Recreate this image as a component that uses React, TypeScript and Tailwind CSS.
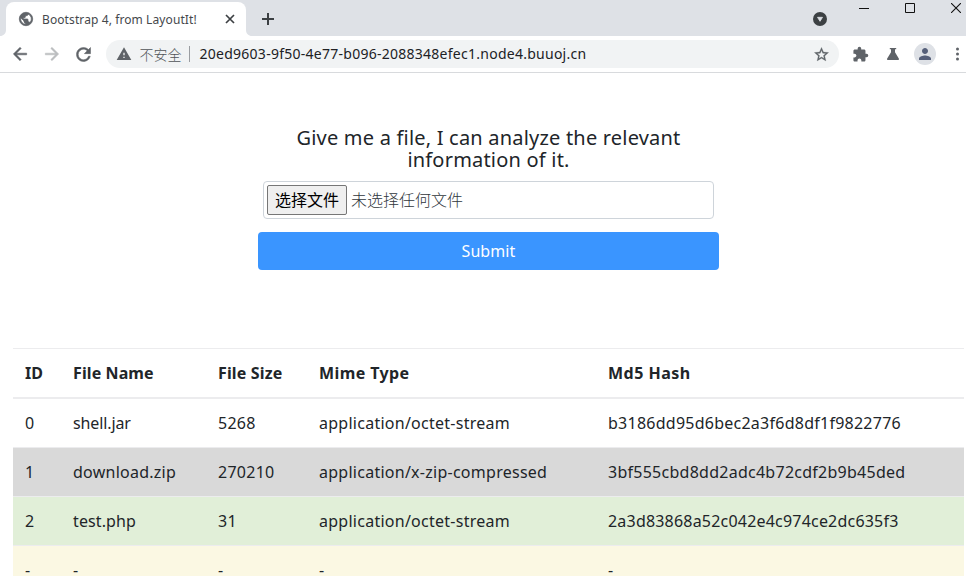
import React from "react";
import { MdWarning, MdExtension, MdPerson } from "react-icons/md";

type Row = { id: string; name: string; size: string; mime: string; hash: string; tone: string; nameSpacing: string; hashSpacing: string };

const rows: Row[] = [
  { id: "0", name: "shell.jar", size: "5268", mime: "application/octet-stream", hash: "b3186dd95d6bec2a3f6d8df1f9822776", tone: "bg-white", nameSpacing: "tracking-[-0.12px]", hashSpacing: "tracking-[0.25px]" },
  { id: "1", name: "download.zip", size: "270210", mime: "application/x-zip-compressed", hash: "3bf555cbd8dd2adc4b72cdf2b9b45ded", tone: "bg-[#d9d9d9]", nameSpacing: "tracking-[0.25px]", hashSpacing: "tracking-[0.26px]" },
  { id: "2", name: "test.php", size: "31", mime: "application/octet-stream", hash: "2a3d83868a52c042e4c974ce2dc635f3", tone: "bg-[#e1efd8]", nameSpacing: "tracking-[0.1px]", hashSpacing: "tracking-[0.2px]" },
  { id: "-", name: "-", size: "-", mime: "-", hash: "-", tone: "bg-[#fbf8e3]", nameSpacing: "", hashSpacing: "" },
];

const grid = "grid grid-cols-[48px_145px_101px_289px_1fr] pl-3";

const paths = {
  back: "M20 11H7.83l5.59-5.59L12 4l-8 8 8 8 1.41-1.41L7.83 13H20v-2z",
  forward: "M12 4l-1.41 1.41L16.17 11H4v2h12.17l-5.58 5.59L12 20l8-8z",
  refresh:
    "M17.65 6.35C16.2 4.9 14.21 4 12 4c-4.42 0-7.99 3.58-7.99 8s3.57 8 7.99 8c3.73 0 6.84-2.55 7.73-6h-2.08c-.82 2.33-3.04 4-5.65 4-3.31 0-6-2.69-6-6s2.69-6 6-6c1.66 0 3.14.69 4.22 1.78L13 11h7V4l-2.35 2.35z",
  star: "M22 9.24l-7.19-.62L12 2 9.19 8.63 2 9.24l5.46 4.73L5.82 21 12 17.27 18.18 21l-1.63-7.03L22 9.24zM12 15.4l-3.76 2.27 1-4.28-3.32-2.88 4.38-.38L12 6.1l1.71 4.04 4.38.38-3.32 2.88 1 4.28L12 15.4z",
  globe:
    "M12 2C6.48 2 2 6.48 2 12s4.48 10 10 10 10-4.48 10-10S17.52 2 12 2zm-1 17.93c-3.95-.49-7-3.85-7-7.93 0-.62.08-1.21.21-1.79L9 15v1c0 1.100.9 2 2 2v1.930zm6.900-2.540c-.26-.81-1-1.390-1.900-1.390h-1v-3c0-.55-.45-1-1-1H8v-2h2c.55 0 1-.45 1-1V7h2c1.100 0 2-.9 2-2v-.41c2.930 1.190 5 4.060 5 7.410 0 2.080-.8 3.970-2.100 5.390z",
};

function Icon({ name, size, weight = 0.6, className = "" }: { name: keyof typeof paths; size: number; weight?: number; className?: string }) {
  return (
    <svg className={`shrink-0 ${className}`} width={size} height={size} viewBox="0 0 24 24" fill="currentColor" stroke="currentColor" strokeWidth={weight}>
      <path d={paths[name]} />
    </svg>
  );
}

function TabStrip() {
  return (
    <div className="flex h-9 items-start bg-[#dee1e6]">
      <div className="relative ml-1.5 mt-0.5 flex h-[34px] w-60 items-center rounded-t-lg bg-white pl-3 pr-2.5">
        <svg className="absolute -left-1.5 bottom-0" width="6" height="6" viewBox="0 0 6 6">
          <path d="M6 0v6H0c3.5 0 6-2.5 6-6Z" fill="#fff" />
        </svg>
        <svg className="absolute -right-1.5 bottom-0" width="6" height="6" viewBox="0 0 6 6">
          <path d="M0 0v6h6C2.500 6 0 3.500 0 0Z" fill="#fff" />
        </svg>
        <Icon name="globe" size={16} weight={1.1} className="text-[#5f6368]" />
        <span className="ml-2 flex-1 whitespace-nowrap pt-px text-xs tracking-[0.1px] text-[#45484c]">
          Bootstrap 4, from LayoutIt!
        </span>
        <svg width="12" height="12" viewBox="0 0 12 12" stroke="#3c4043" strokeWidth="1.7">
          <path d="M2 2l8 8M10 2l-8 8" />
        </svg>
      </div>
      <svg className="ml-4 mt-[13px]" width="12" height="12" viewBox="0 0 12 12" stroke="#3c4043" strokeWidth="2">
        <path d="M6 0v12M0 6h12" />
      </svg>
      <div className="ml-auto flex items-start">
        <svg className="mt-3" width="14" height="14" viewBox="0 0 14 14">
          <circle cx="7" cy="7" r="7" fill="#3c4043" />
          <path d="M4.500 5.300h5l-2.500 4Z" fill="#dee1e6" stroke="#dee1e6" strokeWidth=".8" />
        </svg>
        <svg className="ml-8 mt-2" width="10" height="2" viewBox="0 0 10 2">
          <path d="M0 0h10v1H0z" fill="#111" />
        </svg>
        <svg className="ml-9 mt-[3px]" width="10" height="10" viewBox="0 0 10 10">
          <path d="M.5.500h9v9h-9z" fill="none" stroke="#111" />
        </svg>
        <svg className="ml-9 mr-[5px] mt-[3px]" width="10" height="10" viewBox="0 0 10 10">
          <path d="M0 0l10 10M10 0L0 10" stroke="#111" strokeWidth="1.1" />
        </svg>
      </div>
    </div>
  );
}

function Toolbar() {
  return (
    <div className="flex h-[37px] items-center border-b border-[#d8dadd] bg-white pl-[9.500px] text-[#5f6368]">
      <Icon name="back" size={20} />
      <Icon name="forward" size={20} className="ml-3 text-[#bbbdbf]" />
      <Icon name="refresh" size={21} className="ml-[11.500px]" />
      <div className="ml-[11.500px] flex h-7 w-[733px] shrink-0 items-center rounded-full bg-[#f1f3f4] pl-2.5 pr-[9px] text-sm">
        <MdWarning size={16} />
        <span className="mb-px ml-2 w-[42px] whitespace-nowrap font-['Noto_Sans_CJK_SC',sans-serif] font-light text-[#505458]">
          不安全
        </span>
        <span className="ml-[7px] h-4 w-px bg-[#9a9da1]" />
        <span className="ml-2.5 flex-1 whitespace-nowrap tracking-[0.260px] text-[#202124]">
          20ed9603-9f50-4e77-b096-2088348efec1.node4.buuoj.cn
        </span>
        <Icon name="star" size={17} weight={0.4} />
      </div>
      <MdExtension size={17} className="ml-[13px] shrink-0" />
      <svg className="ml-[17px] shrink-0" width="14" height="14" viewBox="0 0 14 14" fill="#5f6368">
        <path d="M3.800 1h6.400v1.300H9v3l3.800 6.200c.5.900 0 1.500-.8 1.500H2c-.8 0-1.300-.6-.8-1.500L5 5.300v-3H3.800Z" />
      </svg>
      <div className="ml-3.5 flex size-[22px] shrink-0 items-center justify-center rounded-full bg-[#dee1e6]">
        <MdPerson size={18} className="text-[#56607a]" />
      </div>
      <svg className="ml-5 shrink-0" width="4" height="14" viewBox="0 0 4 14" fill="#5f6368">
        <circle cx="1.500" cy="2" r="1.500" />
        <circle cx="1.500" cy="7" r="1.500" />
        <circle cx="1.500" cy="12" r="1.500" />
      </svg>
    </div>
  );
}

function UploadForm() {
  return (
    <form className="ml-[258px] mt-[54px] w-[461px]" onSubmit={(e) => e.preventDefault()}>
      <h2 className="text-center text-xl leading-[22px] tracking-[0.2px]">
        Give me a file, I can analyze the relevant
        <br />
        information of it.
      </h2>
      <div className="mx-[5px] mt-2.5 flex h-[38px] items-center rounded border border-[#ced4da] pl-[3px] font-['Noto_Sans_CJK_SC',sans-serif]">
        <button
          type="button"
          className="flex h-[30px] w-20 items-center justify-center whitespace-nowrap rounded-[2px] border border-[#767676] bg-[#efefef] pb-0.5 text-black"
        >
          选择文件
        </button>
        <span className="ml-1 pb-0.5 font-light text-[#30363c]">未选择任何文件</span>
      </div>
      <button className="mt-[13px] flex h-[38px] w-full items-center justify-center rounded bg-[#3a95ff] tracking-[0.1px] text-white">
        Submit
      </button>
    </form>
  );
}

function FileTable() {
  return (
    <div className="ml-[13px] mr-0.5 mt-[78px]">
      <div className={`${grid} h-[51px] border-b-2 border-t border-b-[#ececee] border-t-[#ececee] py-3 font-bold`}>
        <span>ID</span>
        <span className="tracking-[0.1px]">File Name</span>
        <span className="tracking-[0.15px]">File Size</span>
        <span className="tracking-[0.400px]">Mime Type</span>
        <span className="tracking-[0.5px]">Md5 Hash</span>
      </div>
      {rows.map((r, i) => (
        <div
          key={r.id}
          className={`${grid} ${r.tone} ${i === 0 ? "h-12" : "h-[49px] border-t border-[#ececee]"} py-3 tracking-[0.260px]`}
        >
          <span>{r.id}</span>
          <span className={r.nameSpacing}>{r.name}</span>
          <span>{r.size}</span>
          <span>{r.mime}</span>
          <span className={r.hashSpacing}>{r.hash}</span>
        </div>
      ))}
    </div>
  );
}

export default function App() {
  return (
    <div className="h-[576px] w-[966px] overflow-hidden bg-white font-['Noto_Sans','Noto_Sans_CJK_SC',sans-serif] text-base leading-6 text-[#212529]">
      <TabStrip />
      <Toolbar />
      <UploadForm />
      <FileTable />
    </div>
  );
}
